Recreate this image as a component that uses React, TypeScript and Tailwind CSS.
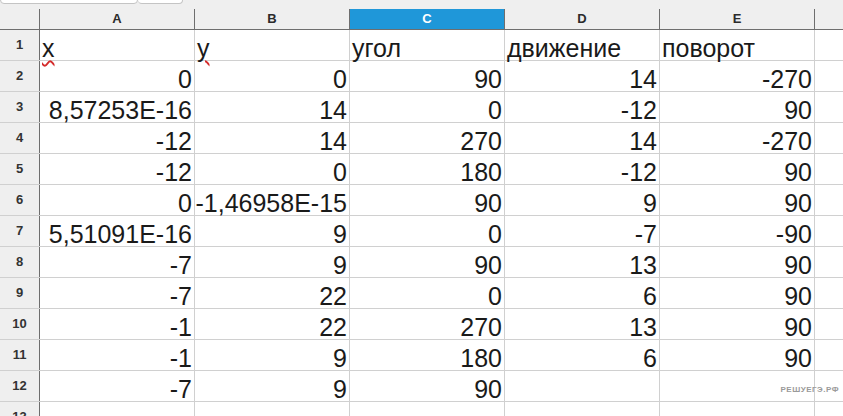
import React from "react";

const cols = ["A", "B", "C", "D", "E"];

const rows: string[][] = [
  ["x", "y", "угол", "движение", "поворот"],
  ["0", "0", "90", "14", "-270"],
  ["8,57253E-16", "14", "0", "-12", "90"],
  ["-12", "14", "270", "14", "-270"],
  ["-12", "0", "180", "-12", "90"],
  ["0", "-1,46958E-15", "90", "9", "90"],
  ["5,51091E-16", "9", "0", "-7", "-90"],
  ["-7", "9", "90", "13", "90"],
  ["-7", "22", "0", "6", "90"],
  ["-1", "22", "270", "13", "90"],
  ["-1", "9", "180", "6", "90"],
  ["-7", "9", "90", "", ""],
  ["", "", "", "", ""],
];

const font = { fontFamily: '"Liberation Sans", Arial, sans-serif' };

export default function App() {
  return (
    <div
      className="relative h-[416px] w-[843px] overflow-hidden bg-white text-[#1a1a1a]"
      style={font}
    >
      {/* name box strip */}
      <div className="flex h-[9px] bg-[#efefef]">
        <div className="-mt-[6px] h-[10px] w-[138px] rounded-b-[4px] border border-[#c4c4c4] bg-white" />
        <div className="-mt-[6px] h-[10px] w-[45px] rounded-b-[4px] border border-l-0 border-[#c4c4c4] bg-white" />
      </div>

      {/* column headers */}
      <div className="grid h-[21px] grid-cols-[40px_repeat(5,155px)_1fr] border-b border-[#6e6e6e] bg-[#efefef]">
        <div className="border-r border-[#6e6e6e]" />
        {cols.map((c) => (
          <div
            key={c}
            className={`flex items-center justify-center border-r border-[#6e6e6e] text-[13px] font-bold ${
              c === "C" ? "bg-[#1f97d9] text-white" : "text-[#2b2b2b]"
            }`}
          >
            {c}
          </div>
        ))}
        <div />
      </div>

      {/* rows */}
      {rows.map((r, i) => (
        <div
          key={i}
          className="grid h-[31px] grid-cols-[40px_repeat(5,155px)_1fr] border-b border-[#d0d0d0]"
        >
          <div className="flex items-center justify-center border-r border-[#6e6e6e] bg-[#efefef] text-[13px] font-bold text-[#333]">
            {i + 1}
          </div>
          {r.map((v, j) => (
            <div
              key={j}
              className={`flex items-end overflow-visible whitespace-nowrap border-r border-[#d0d0d0] px-[2px] text-[25px] leading-[24px] ${
                i === 0 ? "justify-start" : "justify-end"
              }`}
            >
              {i === 0 && j < 2 ? (
                <span className="underline decoration-[#d42a2a] decoration-wavy decoration-[1.5px] underline-offset-[3px]">
                  {v}
                </span>
              ) : (
                v
              )}
            </div>
          ))}
          <div />
        </div>
      ))}

      {/* watermark */}
      <div className="absolute right-[4px] top-[384px] text-[8px] font-bold tracking-[0.5px] text-[#9a9a9a]">
        РЕШУЕГЭ.РФ
      </div>
    </div>
  );
}
